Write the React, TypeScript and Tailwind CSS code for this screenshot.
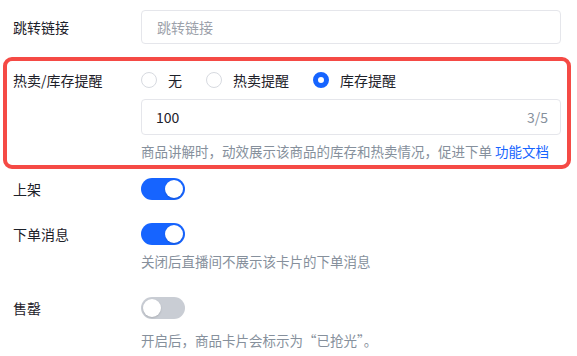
import { useState } from "react"

const font = { fontFamily: '"Noto Sans CJK SC", "Noto Sans", sans-serif' }

const Toggle = ({ on }: { on: boolean }) => (
  <button
    className={`relative block h-[22px] w-[44px] rounded-full ${on ? "bg-[#1664ff]" : "bg-[#c9cdd4]"}`}
  >
    <span
      className={`absolute top-[2px] h-[18px] w-[18px] rounded-full bg-white shadow-[0_1px_2px_rgba(0,0,0,0.15)] ${
        on ? "left-[24px]" : "left-[2px]"
      }`}
    />
  </button>
)

const Radio = ({ checked, label }: { checked: boolean; label: string }) => (
  <label className="flex items-center gap-[11px]">
    {checked ? (
      <span className="h-4 w-4 rounded-full border-[5px] border-[#1664ff] bg-white" />
    ) : (
      <span className="h-4 w-4 rounded-full border border-[#d7dae0] bg-white" />
    )}
    <span className="text-[14px] text-[#1d2129]">{label}</span>
  </label>
)

const App = () => {
  const [mode] = useState("stock")

  return (
    <div className="h-[356px] w-[577px] overflow-hidden bg-white pt-[10px]" style={font}>
      <div className="flex items-center pl-[13px] pr-[16px]">
        <div className="w-[128px] text-[14px] text-[#1d2129]">跳转链接</div>
        <div className="flex h-[34px] flex-1 items-center rounded-[4px] border border-[#e5e6eb] px-[15px] text-[14px] text-[#9ca1aa]">
          跳转链接
        </div>
      </div>

      <div className="ml-[3px] mr-[6px] mt-[13px] rounded-[9px] border-4 border-[#f54a45] pb-[4px] pl-[6px] pr-[6px] pt-[9px]">
        <div className="flex">
          <div className="w-[128px] text-[14px] leading-[20px] text-[#1d2129]">热卖/库存提醒</div>
          <div className="flex-1">
            <div className="flex h-[20px] items-center gap-[24px]">
              <Radio checked={mode === "none"} label="无" />
              <Radio checked={mode === "hot"} label="热卖提醒" />
              <Radio checked={mode === "stock"} label="库存提醒" />
            </div>
            <div className="mt-[9px] flex h-[36px] items-center justify-between rounded-[4px] border border-[#e5e6eb] pl-[14px] pr-[12px]">
              <span className="text-[14px] text-[#1d2129]">100</span>
              <span className="text-[14px] text-[#86909c]">3/5</span>
            </div>
            <div className="mt-[6px] whitespace-nowrap text-[13.5px] leading-[20px] text-[#86909c]">
              商品讲解时，动效展示该商品的库存和热卖情况，促进下单{" "}
              <span className="text-[#1664ff]">功能文档</span>
            </div>
          </div>
        </div>
      </div>

      <div className="mt-[9px] flex items-center pl-[13px]">
        <div className="w-[128px] text-[14px] text-[#1d2129]">上架</div>
        <Toggle on />
      </div>

      <div className="mt-[23px] flex pl-[13px]">
        <div className="w-[128px] text-[14px] leading-[22px] text-[#1d2129]">下单消息</div>
        <div>
          <Toggle on />
          <div className="mt-[6px] whitespace-nowrap text-[13.5px] leading-[20px] text-[#86909c]">
            关闭后直播间不展示该卡片的下单消息
          </div>
        </div>
      </div>

      <div className="mt-[26px] flex pl-[13px]">
        <div className="w-[128px] text-[14px] leading-[22px] text-[#1d2129]">售罄</div>
        <div>
          <Toggle on={false} />
          <div className="mt-[11px] whitespace-nowrap text-[13.5px] leading-[20px] text-[#86909c]">
            开启后，商品卡片会标示为“已抢光”。
          </div>
        </div>
      </div>
    </div>
  )
}

export default App
